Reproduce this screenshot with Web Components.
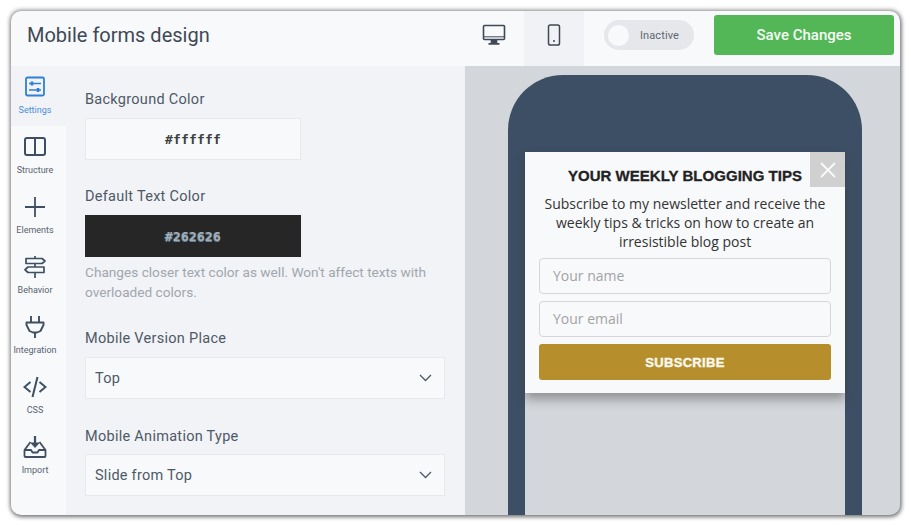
<!DOCTYPE html>
<html><head><meta charset="utf-8">
<style>
html,body{margin:0;padding:0;background:#fff;overflow:hidden}
body{width:911px;height:526px;font-family:Roboto,sans-serif}
</style></head>
<body>
<app-window>
  <app-header slot="header" title="Mobile forms design"></app-header>
  <side-nav slot="nav">
    <nav-item label="Settings" active><svg viewBox="0 0 24 22" fill="none" stroke="currentColor" stroke-width="1.800"><rect x="3" y="1.500" width="18" height="18" rx="1.500"/><path d="M6 7.500h12M6 14h12" stroke-width="1.300"/><path d="M9 5.500v4M15 12v4" stroke-width="2.600"/></svg></nav-item>
    <nav-item label="Structure"><svg viewBox="0 0 24 22" fill="none" stroke="currentColor" stroke-width="2"><rect x="2" y="2" width="20" height="17" rx="2"/><path d="M12 2v17"/></svg></nav-item>
    <nav-item label="Elements"><svg viewBox="0 0 24 22" fill="none" stroke="currentColor" stroke-width="1.800"><path d="M12 1v20M2 11h20"/></svg></nav-item>
    <nav-item label="Behavior"><svg viewBox="0 0 24 22" fill="none" stroke="currentColor" stroke-width="1.700" stroke-linejoin="round"><path d="M12 0v2M12 8v3M12 16.500V22M3 2.500h16l3 2.500-3 2.500H3zM21 11H5l-3 2.750 3 2.750h16z"/></svg></nav-item>
    <nav-item label="Integration"><svg viewBox="0 0 24 22" fill="none" stroke="currentColor" stroke-width="1.900" stroke-linejoin="round"><path d="M8 0v6M16 0v6M3.500 6.500h17v2.500l-3 6-3.500 1.500h-4l-3.500-1.500-3-6zM12 16.500V22"/></svg></nav-item>
    <nav-item label="CSS"><svg viewBox="0 0 24 22" fill="none" stroke="currentColor" stroke-width="2"><path d="M7.500 6 1.500 11l6 5M16.500 6l6 5-6 5M14.500 1 9.500 21"/></svg></nav-item>
    <nav-item label="Import"><svg viewBox="0 0 24 22" fill="none" stroke="currentColor" stroke-width="1.800" stroke-linejoin="round"><path d="M12 0v8" stroke-width="2.200"/><path d="M8 7 12 11.500 16 7z" fill="currentColor" stroke-width="1"/><path d="M7.500 6 1.500 14v6a1 1 0 0 0 1 1h19a1 1 0 0 0 1-1v-6l-6-8M1.500 14h6.500l1.500 2.500h5l1.500-2.500h6.500"/></svg></nav-item>
  </side-nav>
  <settings-panel slot="panel">
    <field-row label="Background Color" gap="8"><color-box value="#ffffff"></color-box></field-row>
    <field-row label="Default Text Color" gap="8" top="27"><color-box value="#262626" dark></color-box><p-note>Changes closer text color as well. Won't affect texts with overloaded colors.</p-note></field-row>
    <field-row label="Mobile Version Place" gap="8" top="27"><select-box value="Top"></select-box></field-row>
    <field-row label="Mobile Animation Type" gap="7" top="28"><select-box value="Slide from Top"></select-box></field-row>
  </settings-panel>
  <phone-preview slot="preview"><sub-popup></sub-popup></phone-preview>
</app-window>
<script>
function def(name, html){
  customElements.define(name, class extends HTMLElement{
    connectedCallback(){
      if(this.shadowRoot) return;
      const s=this.attachShadow({mode:'open'});
      s.innerHTML=typeof html==='function'?html(this):html;
    }
  });
}
def('app-window',`<style>
:host{display:block;margin:11px 0 0 11px;width:889px;height:504px;position:relative}
.w{width:889px;height:504px;border-radius:10px;overflow:hidden;display:grid;grid-template-columns:55px 399px 435px;grid-template-rows:55px 449px;background:#f7f9fb}
.sh{position:absolute;inset:0;border-radius:10px;box-shadow:0 0 4px 1px rgba(70,70,70,.6),1px 2px 4px rgba(60,60,60,.45);pointer-events:none}
.h{grid-column:1/4}
</style><div class="sh"></div><div class="w"><div class="h"><slot name="header"></slot></div><slot name="nav"></slot><slot name="panel"></slot><slot name="preview"></slot></div>`);
def('app-header',e=>`<style>
:host{display:flex;align-items:stretch;height:55px;background:#f7f9fb}
h1{margin:0 0 0 16px;font:400 20px/48px Roboto,sans-serif;letter-spacing:0;color:#3f4955;width:437px;height:48px;white-space:nowrap}
.dev{width:60px;height:55px;box-sizing:border-box;padding-bottom:8px;display:flex;align-items:center;justify-content:center}
.dev.on{background:#f0f2f5}
.tg{margin:9px 20px 0 20px;width:90px;height:30px;border-radius:15px;background:#e5e7eb;display:flex;align-items:center;box-sizing:border-box;padding-left:4px;font:400 11px Roboto,sans-serif;color:#5f6771;gap:11px;letter-spacing:.1px}
.k{width:21px;height:21px;border-radius:50%;background:#f7f9fb;flex:none}
button{margin:4px 0 0 0;width:180px;height:40px;border:0;border-radius:3px;background:#53b657;color:#f5fbf5;font:500 15px Roboto,sans-serif;padding:0}
</style><h1>${e.getAttribute('title')}</h1>
<div class="dev"><svg width="24" height="22" viewBox="0 0 24 22" fill="none" stroke="#3f4955" stroke-width="1.600"><rect x="1.500" y="1.500" width="21" height="14" rx="1"/><path d="M1.500 12.800h21" stroke-width="1"/><path d="M9.500 16v2.500h5V16" fill="#3f4955"/><path d="M6.500 19.800h11" stroke-width="1.800"/></svg></div>
<div class="dev on"><svg width="14" height="22" viewBox="0 0 14 22" fill="none" stroke="#3f4955" stroke-width="1.500"><rect x="1.500" y="1" width="11" height="20" rx="1.800"/><circle cx="7" cy="17" r="1" fill="#3f4955" stroke="none"/></svg></div>
<div class="tg"><span class="k"></span><span>Inactive</span></div>
<button>Save Changes</button>`);
def('side-nav',`<style>:host{display:flex;flex-direction:column;background:#f7f9fb;height:449px;overflow:hidden}</style><slot></slot>`);
def('nav-item',e=>`<style>
:host{display:flex;flex-direction:column;align-items:center;height:60px;flex:none;box-sizing:border-box;padding:10px 7px 0 0;color:#3f4f63;font:400 9px/12px Roboto,sans-serif;${e.hasAttribute('active')?'background:#f1f3f6;color:#2f7fd6;':''}}
.i{width:24px;height:22px;margin-bottom:6px}
::slotted(svg){width:24px;height:22px;display:block}
span{color:${e.hasAttribute('active')?'#4a8fdc':'#5a6470'}}
</style><div class="i"><slot></slot></div><span>${e.getAttribute('label')}</span>`);
def('settings-panel',`<style>:host{display:block;background:#f1f3f6;height:449px;overflow:hidden;box-sizing:border-box;padding:24px 20px 0 19px}</style><slot></slot>`);
def('field-row',e=>`<style>
:host{display:block;margin-top:${e.getAttribute('top')||0}px}
label{display:block;font:400 14.500px/20px Roboto,sans-serif;color:#4e5967;margin-bottom:${e.getAttribute('gap')}px;letter-spacing:.28px}
</style><label>${e.getAttribute('label')}</label><slot></slot>`);
def('color-box',e=>{const d=e.hasAttribute('dark');return `<style>
:host{display:flex;align-items:center;justify-content:center;width:216px;height:42px;box-sizing:border-box;${d?'background:#262626;color:#a3adb5;text-shadow:0 1px 0 #5f7f93,-1px 0 0 #4d5b66;':'background:#f7f9fb;border:1px solid #e6e8eb;color:#3d4043;'}font:700 13px "DejaVu Sans Mono","Liberation Mono",monospace;letter-spacing:.2px}
</style>${e.getAttribute('value')}`});
def('p-note',`<style>:host{display:block;font:400 13.650px/20px Roboto,sans-serif;color:#a2a6ae;margin-top:5px}</style><slot></slot>`);
def('select-box',e=>`<style>
:host{display:flex;align-items:center;justify-content:space-between;width:360px;height:42px;box-sizing:border-box;background:#f7f9fb;border:1px solid #e6e8eb;padding:1px 12px 0 9px;font:400 14.500px Roboto,sans-serif;color:#4e5967;letter-spacing:.25px}
svg{margin-top:-2px}
</style><span>${e.getAttribute('value')}</span><svg width="13" height="8" viewBox="0 0 13 8" fill="none" stroke="#4e5967" stroke-width="1.300"><path d="M1 1l5.500 5.500L12 1"/></svg>`);
def('phone-preview',`<style>
:host{display:block;background:#d3d6da;height:449px;overflow:hidden;box-sizing:border-box;padding:9px 0 0 43px}
.p{width:354px;height:480px;background:#3c4f64;border-radius:55px 55px 0 0;box-sizing:border-box;padding:77px 17px 0}
.s{width:320px;height:400px;background:#d3d6da}
</style><div class="p"><div class="s"><slot></slot></div></div>`);
def('sub-popup',`<style>
:host{display:block;position:relative;width:320px;height:241px;box-sizing:border-box;background:#f8f9fb;box-shadow:0 6px 10px rgba(60,60,60,.45);padding:15px 14px 0;text-align:center}
.x{position:absolute;top:0;right:0;width:35px;height:35px;background:#d0d0d0;display:flex;align-items:center;justify-content:center}
h2{margin:0;font:700 15px/18px "Liberation Sans",Arial,sans-serif;color:#222;letter-spacing:.03px;-webkit-text-stroke:.3px #222}
p{margin:9px 0 7px;font:400 14px/19px "Open Sans",sans-serif;color:#333}
.in{height:36px;box-sizing:border-box;border:1px solid #d5d6d8;border-radius:4px;text-align:left;padding-left:13px;font:400 14px/33px "Open Sans",sans-serif;color:#a3a3a3;margin-bottom:7px}
button{display:block;width:292px;height:36px;border:0;border-radius:3px;background:#b68f2c;color:#fbf8ef;font:900 13px "Liberation Sans",Arial,sans-serif;-webkit-text-stroke:.4px #fbf8ef;letter-spacing:.3px;padding:0}
</style><div class="x"><svg width="18" height="18" viewBox="0 0 18 18" stroke="#f8f9fb" stroke-width="1.800"><path d="M2 2l14 14M16 2L2 16"/></svg></div>
<h2>YOUR WEEKLY BLOGGING TIPS</h2>
<p>Subscribe to my newsletter and receive the weekly tips &amp; tricks on how to create an irresistible blog post</p>
<div class="in">Your name</div><div class="in">Your email</div><button>SUBSCRIBE</button>`);
</script>
</body></html>
